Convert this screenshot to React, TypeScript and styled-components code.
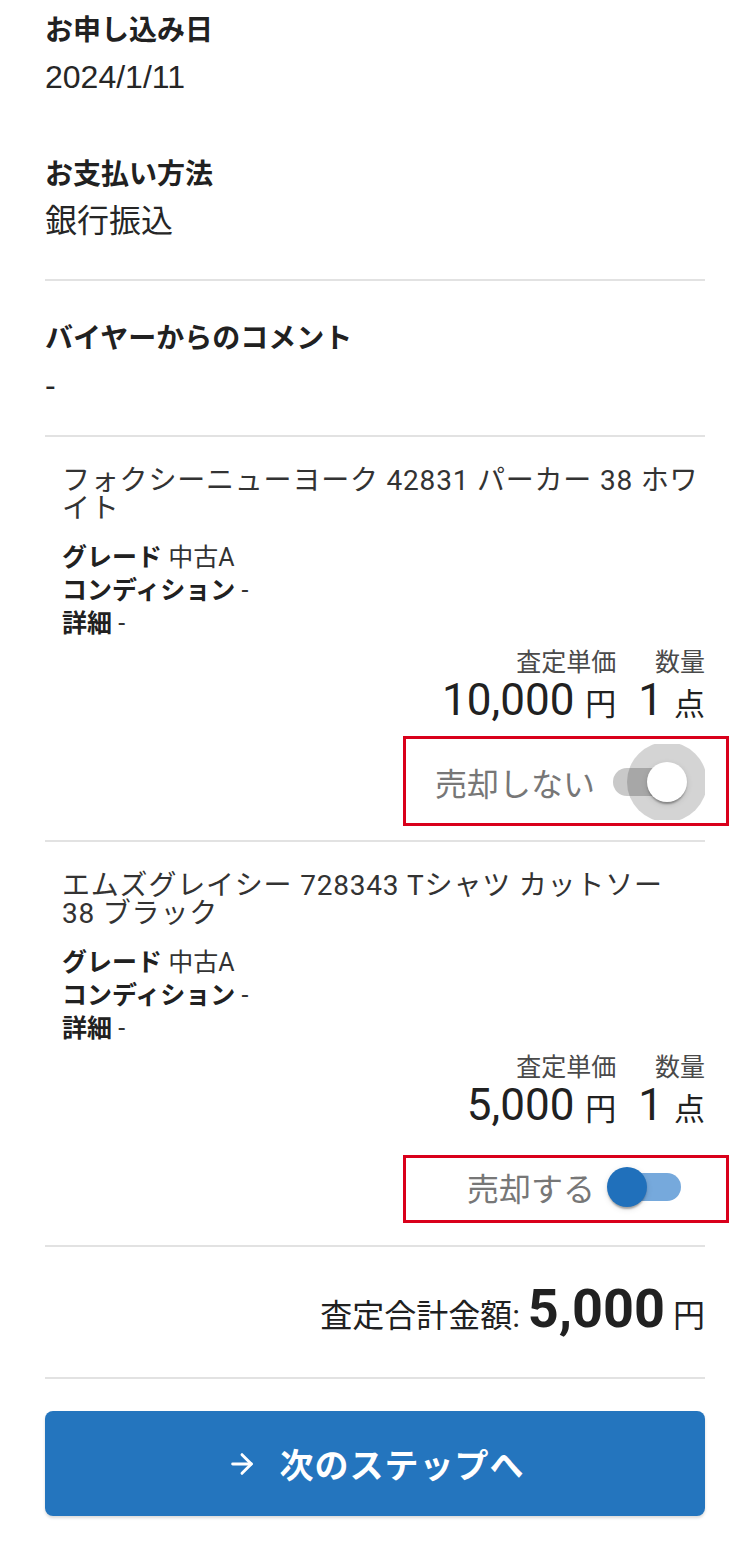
import React from "react";
import styled, { createGlobalStyle } from "styled-components";
import { ArrowRight } from "lucide-react";

type Item = {
  title: string;
  grade: string;
  condition: string;
  detail: string;
  price: string;
  qty: string;
  sell: boolean;
};

const items: Item[] = [
  {
    title: "フォクシーニューヨーク 42831 パーカー 38 ホワイト",
    grade: "中古A",
    condition: "-",
    detail: "-",
    price: "10,000",
    qty: "1",
    sell: false,
  },
  {
    title: "エムズグレイシー 728343 Tシャツ カットソー 38 ブラック",
    grade: "中古A",
    condition: "-",
    detail: "-",
    price: "5,000",
    qty: "1",
    sell: true,
  },
];

export default function App() {
  return (
    <>
      <GlobalStyle />
      <Page>
        <InfoSection>
          <Field>
            <Label>お申し込み日</Label>
            <Value>2024/1/11</Value>
          </Field>
          <Field>
            <Label>お支払い方法</Label>
            <Value>銀行振込</Value>
          </Field>
        </InfoSection>

        <CommentSection>
          <Field>
            <Label>バイヤーからのコメント</Label>
            <Value>-</Value>
          </Field>
        </CommentSection>

        {items.map((item, i) => (
          <ItemCard key={i}>
            <ItemTitle>{item.title}</ItemTitle>
            <Specs>
              <SpecLine>
                <b>グレード</b> {item.grade}
              </SpecLine>
              <SpecLine>
                <b>コンディション</b> {item.condition}
              </SpecLine>
              <SpecLine>
                <b>詳細</b> {item.detail}
              </SpecLine>
            </Specs>
            <PriceGrid>
              <PriceLabel>査定単価</PriceLabel>
              <PriceLabel>数量</PriceLabel>
              <PriceValue>
                {item.price} <Unit>円</Unit>
              </PriceValue>
              <PriceValue>
                {item.qty} <Unit>点</Unit>
              </PriceValue>
            </PriceGrid>
            <ToggleRow>
              <ToggleLabel>{item.sell ? "売却する" : "売却しない"}</ToggleLabel>
              <SellSwitch on={item.sell} />
              <Annotation $top={item.sell ? 6 : -8} $height={item.sell ? 68 : 90} />
            </ToggleRow>
          </ItemCard>
        ))}

        <TotalSection>
          査定合計金額: <TotalAmount>5,000</TotalAmount> <TotalUnit>円</TotalUnit>
        </TotalSection>

        <NextButton type="button">
          <ArrowRight size={32} strokeWidth={2.2} />
          <span>次のステップへ</span>
        </NextButton>
      </Page>
    </>
  );
}

function SellSwitch({ on }: { on: boolean }) {
  return (
    <SwitchRoot>
      <Track $on={on} />
      {!on && <Halo />}
      <Thumb $on={on} />
    </SwitchRoot>
  );
}

const GlobalStyle = createGlobalStyle`
  html, body {
    margin: 0;
    padding: 0;
    background: #fff;
  }
  body {
    font-family: "Roboto", "Noto Sans CJK JP", sans-serif;
    color: #212121;
    -webkit-font-smoothing: antialiased;
  }
  * {
    box-sizing: border-box;
  }
`;

const Page = styled.div`
  width: 752px;
  padding: 8px 47px 28px 45px;
  display: flex;
  flex-direction: column;
`;

const InfoSection = styled.section`
  display: flex;
  flex-direction: column;
  gap: 52px;
  padding-bottom: 35px;
`;

const CommentSection = styled.section`
  border-top: 2px solid #e2e2e2;
  padding: 35px 0 27px;
`;

const Field = styled.div`
  display: flex;
  flex-direction: column;
`;

const Label = styled.div`
  font-size: 28px;
  font-weight: 700;
  line-height: 46px;
  color: #212121;
`;

const Value = styled.div`
  font-family: "Liberation Sans", "Noto Sans CJK JP", sans-serif;
  font-size: 32px;
  line-height: 46px;
  color: #262626;
`;

const ItemCard = styled.article`
  border-top: 2px solid #e2e2e2;
  padding: 30px 0 20px 17px;
  display: flex;
  flex-direction: column;
`;

const ItemTitle = styled.div`
  font-size: 28px;
  line-height: 28px;
  letter-spacing: 0.8px;
  color: #333;
  padding-right: 6px;
`;

const Specs = styled.div`
  margin-top: 18px;
  display: flex;
  flex-direction: column;
`;

const SpecLine = styled.div`
  font-size: 25px;
  line-height: 33px;
  color: #333;

  b {
    font-weight: 700;
    color: #212121;
  }
`;

const PriceGrid = styled.div`
  margin-top: 8px;
  align-self: flex-end;
  display: grid;
  grid-template-columns: auto auto;
  column-gap: 22px;
  justify-items: end;
`;

const PriceLabel = styled.div`
  font-size: 25px;
  line-height: 30px;
  color: #4a4a4a;
`;

const PriceValue = styled.div`
  font-size: 44px;
  line-height: 44px;
  height: 44px;
  color: #212121;
`;

const Unit = styled.span`
  font-size: 31px;
  font-weight: 400;
  line-height: 1;
`;

const ToggleRow = styled.div`
  position: relative;
  margin-top: 22px;
  display: flex;
  justify-content: flex-end;
  align-items: center;
  height: 76px;
`;

const ToggleLabel = styled.span`
  font-size: 32px;
  color: #777;
  margin-right: -6px;
`;

const Annotation = styled.div<{ $top: number; $height: number }>`
  position: absolute;
  right: -24px;
  width: 326px;
  top: ${(p) => p.$top}px;
  height: ${(p) => p.$height}px;
  border: 3px solid #d9001b;
  pointer-events: none;
`;

const SwitchRoot = styled.span`
  position: relative;
  display: inline-block;
  width: 116px;
  height: 76px;
  overflow: hidden;
  flex-shrink: 0;
`;

const Track = styled.span<{ $on: boolean }>`
  position: absolute;
  left: 24px;
  right: 24px;
  top: 24px;
  height: 28px;
  border-radius: 14px;
  background: ${(p) => (p.$on ? "#76a9dc" : "#c9c9c9")};
`;

const Halo = styled.span`
  position: absolute;
  left: 38px;
  top: -2px;
  width: 80px;
  height: 80px;
  border-radius: 50%;
  background: rgba(0, 0, 0, 0.17);
`;

const Thumb = styled.span<{ $on: boolean }>`
  position: absolute;
  top: 18px;
  left: ${(p) => (p.$on ? 18 : 58)}px;
  width: 40px;
  height: 40px;
  border-radius: 50%;
  background: ${(p) => (p.$on ? "#2070bb" : "#fff")};
  box-shadow: 0 4px 2px -2px rgba(0, 0, 0, 0.2), 0 2px 2px rgba(0, 0, 0, 0.14),
    0 2px 6px rgba(0, 0, 0, 0.12);
`;

const TotalSection = styled.section`
  border-top: 2px solid #e2e2e2;
  border-bottom: 2px solid #e2e2e2;
  padding: 35px 0;
  height: 134px;
  text-align: right;
  font-size: 32px;
  line-height: 60px;
  color: #212121;
`;

const TotalAmount = styled.span`
  font-size: 54px;
  font-weight: 700;
  line-height: 1;
`;

const TotalUnit = styled.span`
  font-size: 32px;
  line-height: 1;
`;

const NextButton = styled.button`
  margin-top: 32px;
  width: 100%;
  height: 105px;
  border: none;
  border-radius: 8px;
  background: #2475be;
  color: #fff;
  display: flex;
  align-items: center;
  justify-content: center;
  gap: 22px;
  font-family: "Roboto", "Noto Sans CJK JP", sans-serif;
  font-size: 34px;
  font-weight: 700;
  letter-spacing: 1px;
  box-shadow: 0 2px 3px rgba(0, 0, 0, 0.15);
  cursor: pointer;
`;
